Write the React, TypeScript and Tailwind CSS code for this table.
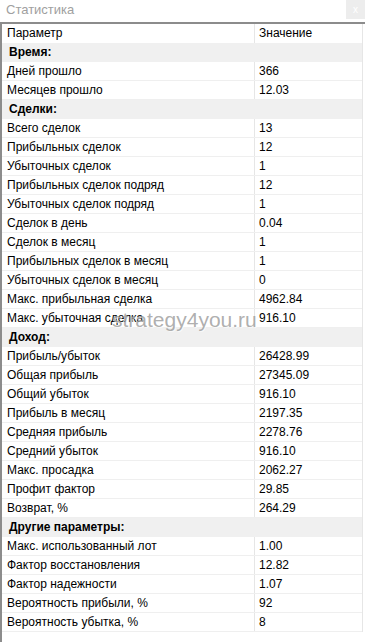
type Row = { kind: 'section'; label: string } | { kind: 'data'; label: string; value: string }

const rows: Row[] = [
  { kind: 'section', label: 'Время:' },
  { kind: 'data', label: 'Дней прошло', value: '366' },
  { kind: 'data', label: 'Месяцев прошло', value: '12.03' },
  { kind: 'section', label: 'Сделки:' },
  { kind: 'data', label: 'Всего сделок', value: '13' },
  { kind: 'data', label: 'Прибыльных сделок', value: '12' },
  { kind: 'data', label: 'Убыточных сделок', value: '1' },
  { kind: 'data', label: 'Прибыльных сделок подряд', value: '12' },
  { kind: 'data', label: 'Убыточных сделок подряд', value: '1' },
  { kind: 'data', label: 'Сделок в день', value: '0.04' },
  { kind: 'data', label: 'Сделок в месяц', value: '1' },
  { kind: 'data', label: 'Прибыльных сделок в месяц', value: '1' },
  { kind: 'data', label: 'Убыточных сделок в месяц', value: '0' },
  { kind: 'data', label: 'Макс. прибыльная сделка', value: '4962.84' },
  { kind: 'data', label: 'Макс. убыточная сделка', value: '916.10' },
  { kind: 'section', label: 'Доход:' },
  { kind: 'data', label: 'Прибыль/убыток', value: '26428.99' },
  { kind: 'data', label: 'Общая прибыль', value: '27345.09' },
  { kind: 'data', label: 'Общий убыток', value: '916.10' },
  { kind: 'data', label: 'Прибыль в месяц', value: '2197.35' },
  { kind: 'data', label: 'Средняя прибыль', value: '2278.76' },
  { kind: 'data', label: 'Средний убыток', value: '916.10' },
  { kind: 'data', label: 'Макс. просадка', value: '2062.27' },
  { kind: 'data', label: 'Профит фактор', value: '29.85' },
  { kind: 'data', label: 'Возврат, %', value: '264.29' },
  { kind: 'section', label: 'Другие параметры:' },
  { kind: 'data', label: 'Макс. использованный лот', value: '1.00' },
  { kind: 'data', label: 'Фактор восстановления', value: '12.82' },
  { kind: 'data', label: 'Фактор надежности', value: '1.07' },
  { kind: 'data', label: 'Вероятность прибыли, %', value: '92' },
  { kind: 'data', label: 'Вероятность убытка, %', value: '8' },
]

export default function App() {
  return (
    <div
      className="relative h-[643px] w-[365px] overflow-hidden bg-white text-[12px] text-black"
      style={{ fontFamily: '"Liberation Sans", Arial, sans-serif' }}
    >
      {/* title bar */}
      <div className="flex h-[22px] items-start justify-between">
        <span className="pl-[6px] pt-[2px] text-[13px] leading-[16px] text-[#a0a0a0]">Статистика</span>
        <div className="flex h-[19px] w-[19px] items-center justify-center bg-[#ededed] text-[10px] leading-none text-white">
          x
        </div>
      </div>

      <div className="h-[620px] border-l-2 border-t-2 border-[#8c8c8c]">
        <div className="w-[361px] border-r border-[#e6e6e6]">
          {/* header */}
          <div className="flex h-[19px] items-center">
            <div className="h-full w-[252px] pl-[5px] leading-[19px]">Параметр</div>
            <div className="h-full flex-1 border-l border-[#e6e6e6] pl-[4px] leading-[19px]">Значение</div>
          </div>

          {rows.map((r, i) =>
            r.kind === 'section' ? (
              <div key={i} className="h-[19px] bg-[#f0f0f0] pl-[7px] font-bold leading-[19px]">
                {r.label}
              </div>
            ) : (
              <div key={i} className="flex h-[19px] border-b border-[#efefef]">
                <div className="w-[252px] pl-[5px] leading-[18px]">{r.label}</div>
                <div className="flex-1 border-l border-[#e6e6e6] pl-[4px] leading-[18px]">{r.value}</div>
              </div>
            ),
          )}
        </div>
      </div>

      {/* watermark */}
      <div
        className="pointer-events-none absolute left-[112px] top-[308px] text-[21px] leading-[24px] text-[#9a9a9a]/80"
        style={{ textShadow: '1px 1px 0 rgba(255,255,255,0.6)' }}
      >
        strategy4you.ru
      </div>
    </div>
  )
}
